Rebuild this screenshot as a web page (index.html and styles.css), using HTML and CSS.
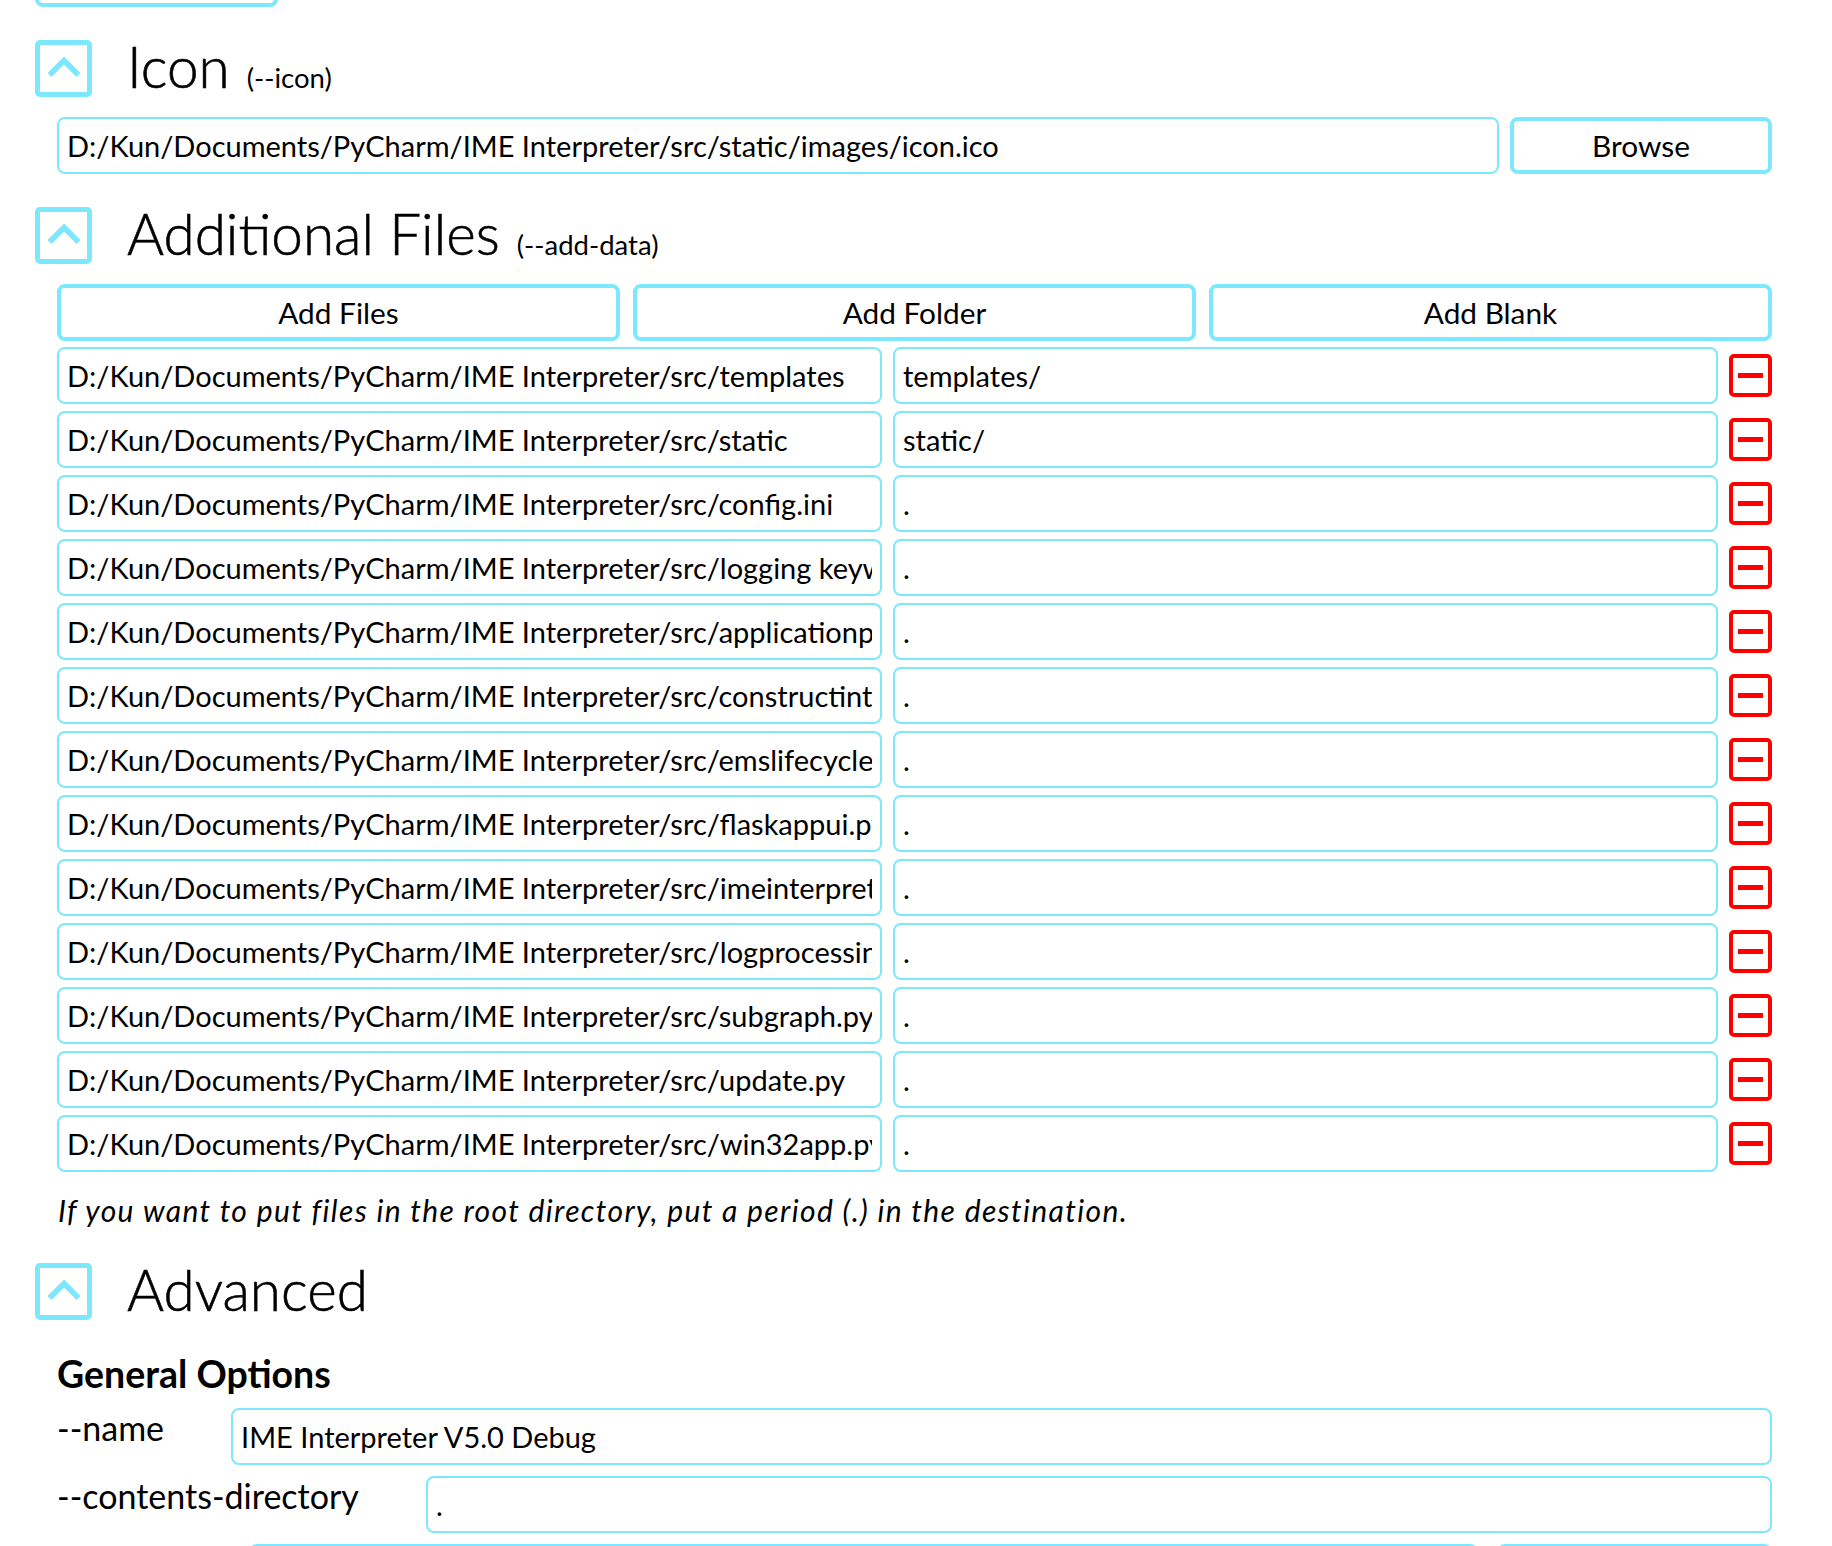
FILE: index.html
```html
<!DOCTYPE html>
<html lang="en">
<head>
<meta charset="utf-8">
<title>Auto Py to Exe</title>
<link rel="stylesheet" href="styles.css">
</head>
<body>
<main class="page">
  <div class="stub"><button class="btn stub-btn" type="button"></button></div>

  <section class="section">
    <div class="section-head">
      <span class="chev"><svg viewBox="0 0 47 47" width="47" height="47"><polyline points="9.5,30 24,15.5 38.5,30" /></svg></span>
      <h2 class="title">Icon<span class="sub">(--icon)</span></h2>
    </div>
    <div class="section-body">
      <div class="icon-row">
        <div class="field"><span class="val">D:/Kun/Documents/PyCharm/IME Interpreter/src/static/images/icon.ico</span></div>
        <button class="btn browse" type="button">Browse</button>
      </div>
    </div>
  </section>

  <section class="section">
    <div class="section-head">
      <span class="chev"><svg viewBox="0 0 47 47" width="47" height="47"><polyline points="9.5,30 24,15.5 38.5,30" /></svg></span>
      <h2 class="title">Additional Files<span class="sub">(--add-data)</span></h2>
    </div>
    <div class="section-body">
      <div class="add-buttons">
        <button class="btn" type="button">Add Files</button>
        <button class="btn" type="button">Add Folder</button>
        <button class="btn" type="button">Add Blank</button>
      </div>
      <div class="data-list">
        <div class="data-row"><div class="field"><span class="val">D:/Kun/Documents/PyCharm/IME Interpreter/src/templates</span></div><div class="field"><span class="val">templates/</span></div><button class="remove" type="button"><span></span></button></div>
        <div class="data-row"><div class="field"><span class="val">D:/Kun/Documents/PyCharm/IME Interpreter/src/static</span></div><div class="field"><span class="val">static/</span></div><button class="remove" type="button"><span></span></button></div>
        <div class="data-row"><div class="field"><span class="val">D:/Kun/Documents/PyCharm/IME Interpreter/src/config.ini</span></div><div class="field"><span class="val">.</span></div><button class="remove" type="button"><span></span></button></div>
        <div class="data-row"><div class="field"><span class="val">D:/Kun/Documents/PyCharm/IME Interpreter/src/logging keywords.txt</span></div><div class="field"><span class="val">.</span></div><button class="remove" type="button"><span></span></button></div>
        <div class="data-row"><div class="field"><span class="val">D:/Kun/Documents/PyCharm/IME Interpreter/src/applicationprocessing.py</span></div><div class="field"><span class="val">.</span></div><button class="remove" type="button"><span></span></button></div>
        <div class="data-row"><div class="field"><span class="val">D:/Kun/Documents/PyCharm/IME Interpreter/src/constructinterpreter.py</span></div><div class="field"><span class="val">.</span></div><button class="remove" type="button"><span></span></button></div>
        <div class="data-row"><div class="field"><span class="val">D:/Kun/Documents/PyCharm/IME Interpreter/src/emslifecycle.py</span></div><div class="field"><span class="val">.</span></div><button class="remove" type="button"><span></span></button></div>
        <div class="data-row"><div class="field"><span class="val">D:/Kun/Documents/PyCharm/IME Interpreter/src/flaskappui.py</span></div><div class="field"><span class="val">.</span></div><button class="remove" type="button"><span></span></button></div>
        <div class="data-row"><div class="field"><span class="val">D:/Kun/Documents/PyCharm/IME Interpreter/src/imeinterpreter.py</span></div><div class="field"><span class="val">.</span></div><button class="remove" type="button"><span></span></button></div>
        <div class="data-row"><div class="field"><span class="val">D:/Kun/Documents/PyCharm/IME Interpreter/src/logprocessing.py</span></div><div class="field"><span class="val">.</span></div><button class="remove" type="button"><span></span></button></div>
        <div class="data-row"><div class="field"><span class="val">D:/Kun/Documents/PyCharm/IME Interpreter/src/subgraph.py</span></div><div class="field"><span class="val">.</span></div><button class="remove" type="button"><span></span></button></div>
        <div class="data-row"><div class="field"><span class="val">D:/Kun/Documents/PyCharm/IME Interpreter/src/update.py</span></div><div class="field"><span class="val">.</span></div><button class="remove" type="button"><span></span></button></div>
        <div class="data-row"><div class="field"><span class="val">D:/Kun/Documents/PyCharm/IME Interpreter/src/win32app.py</span></div><div class="field"><span class="val">.</span></div><button class="remove" type="button"><span></span></button></div>
      </div>
      <p class="note">If you want to put files in the root directory, put a period (.) in the destination.</p>
    </div>
  </section>

  <section class="section advanced">
    <div class="section-head">
      <span class="chev"><svg viewBox="0 0 47 47" width="47" height="47"><polyline points="9.5,30 24,15.5 38.5,30" /></svg></span>
      <h2 class="title">Advanced</h2>
    </div>
    <div class="section-body">
      <h3 class="group-title">General Options</h3>
      <div class="opt-row">
        <label class="opt-label">--name</label>
        <div class="field"><span class="val">IME Interpreter V5.0 Debug</span></div>
      </div>
      <div class="opt-row">
        <label class="opt-label">--contents-directory</label>
        <div class="field"><span class="val">.</span></div>
      </div>
      <div class="opt-row">
        <label class="opt-label opt-label-short">--upx-dir</label>
        <div class="field"><span class="val"></span></div>
        <button class="btn browse-wide" type="button">Browse</button>
      </div>
    </div>
  </section>
</main>
</body>
</html>
```
FILE: styles.css
```css
html {
  overflow: hidden;
}

body {
  margin: 0;
  background: #ffffff;
  color: #000000;
  font-family: Lato, "Open Sans", sans-serif;
}

.page {
  padding: 0 60px 0 35px;
}

/* partially visible button from the section above */
.stub {
  margin-top: -50px;
}

.btn {
  box-sizing: border-box;
  height: 57px;
  border: 4px solid #7de8fd;
  border-radius: 8px;
  background: #ffffff;
  color: #000000;
  font-family: Lato, "Open Sans", sans-serif;
  font-size: 29.8px;
  padding: 0;
  cursor: pointer;
}

.stub-btn {
  width: 243px;
  display: block;
}

.section {
  margin-top: 33px;
}

.section-head {
  display: flex;
  align-items: flex-start;
  gap: 35px;
  height: 57px;
}

.chev {
  box-sizing: border-box;
  width: 57px;
  height: 57px;
  border: 5px solid #7de8fd;
  border-radius: 5px;
  display: flex;
  flex: none;
}

.chev svg {
  display: block;
}

.chev polyline {
  fill: none;
  stroke: #7de8fd;
  stroke-width: 5.5;
  stroke-linecap: butt;
  stroke-linejoin: miter;
}

.title {
  margin: 0;
  font-size: 56.6px;
  font-weight: 300;
  line-height: 53px;
  white-space: nowrap;
  -webkit-text-stroke: 0.6px #000000;
}

.sub {
  margin-left: 17px;
  font-size: 27.5px;
  font-weight: 400;
  -webkit-text-stroke: 0;
}

.section-body {
  padding-left: 22px;
  margin-top: 20px;
}

.field {
  box-sizing: border-box;
  height: 57px;
  border: 2px solid #7de8fd;
  border-radius: 8px;
  padding: 0 8px 0 8px;
  display: flex;
  align-items: center;
  font-size: 29px;
  min-width: 0;
}

.val {
  flex: 1 1 auto;
  min-width: 0;
  white-space: nowrap;
  overflow: hidden;
}

.icon-row {
  display: flex;
  gap: 11px;
}

.icon-row .field {
  flex: 1;
}

.browse {
  width: 262px;
  flex: none;
}

.add-buttons {
  display: grid;
  grid-template-columns: repeat(3, 1fr);
  column-gap: 13px;
}

.data-list {
  display: flex;
  flex-direction: column;
  gap: 7px;
  margin-top: 6px;
}

.data-row {
  display: grid;
  grid-template-columns: 1fr 1fr 43px;
  column-gap: 11px;
  align-items: center;
}

.remove {
  box-sizing: border-box;
  width: 43px;
  height: 43px;
  border: 4px solid #ff0000;
  border-radius: 5px;
  background: #ffffff;
  padding: 0;
  display: flex;
  align-items: center;
  justify-content: center;
  cursor: pointer;
}

.remove span {
  display: block;
  width: 25px;
  height: 5px;
  background: #ff0000;
}

.note {
  margin: 20px 0 0 1px;
  font-size: 30px;
  font-style: italic;
  letter-spacing: 1.37px;
  line-height: 36px;
}

.advanced {
  margin-top: 35px;
}

.group-title {
  margin: 32px 0 12px;
  font-size: 37.5px;
  font-weight: 700;
  line-height: 44px;
}

.advanced .section-body {
  margin-top: 0;
}

.opt-row {
  display: flex;
  align-items: flex-start;
  margin-bottom: 11px;
}

.opt-label {
  font-size: 34px;
  line-height: 40px;
  margin-right: 67px;
  white-space: nowrap;
  flex: none;
}

.opt-label-short {
  margin-right: 61px;
}

.opt-row .field {
  flex: 1;
}

.browse-wide {
  width: 275px;
  flex: none;
  margin-left: 19px;
}
```
